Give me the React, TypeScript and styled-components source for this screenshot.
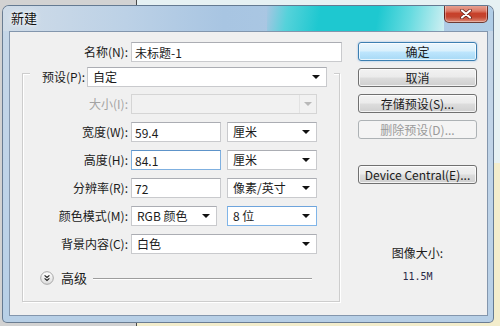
import React from "react";
import styled, { createGlobalStyle, css } from "styled-components";

const Global = createGlobalStyle`
  html, body { margin: 0; padding: 0; }
  body {
    width: 500px; height: 326px; overflow: hidden;
    font-family: "Noto Sans CJK SC", "Noto Sans", "Liberation Sans", sans-serif;
    font-size: 12px; color: #1b1b1b;
  }
`;

const Desktop = styled.div`
  width: 500px; height: 326px; box-sizing: border-box;
  padding: 5px 6px 3px 2px;
  background:
    linear-gradient(90deg, #d2d2d2 0 136px, #4a4a4a 136px 137px, transparent 137px),
    linear-gradient(180deg, #e6f1f3 0 50%, #f3edcc 50%);
`;

const Window = styled.div`
  width: 492px; height: 318px; box-sizing: border-box;
  border: 1px solid rgba(45, 65, 90, 0.6);
  border-radius: 7px 7px 5px 5px;
  background: linear-gradient(180deg, #c7d7e7 0%, #bed3e8 60%, #b7cfe6 100%);
  display: flex; flex-direction: column;
  overflow: hidden;
`;

const TitleBar = styled.div`
  height: 25px; flex: none;
  display: flex; justify-content: space-between; align-items: flex-start;
  padding-left: 8px;
  background-color: #b4cce4;
  background-image: linear-gradient(90deg, #d0dce8 0%, #bcd1e6 25%, #a8c5e2 45%, #b0cde6 100%);
`;

const Streak = styled.div`
  flex: 1; align-self: stretch;
  margin: 0 0 0 230px;
  background-color: #2cccd3;
  background-image: linear-gradient(100deg, #a8c5e2 0%, #55d2da 12%, #1ec8d0 30%, #1ec8d0 62%, #66dbe0 80%, #cfeff2 100%);
`;

const Title = styled.span`
  font-size: 13px; line-height: 16px; margin-top: 4px;
  color: #111;
  text-shadow: 0 0 6px rgba(255,255,255,1), 0 0 3px rgba(255,255,255,1);
`;

const CloseButton = styled.div`
  width: 44px; height: 18px; box-sizing: border-box; flex: none;
  margin: -1px 5px 0 0;
  border: 1px solid rgba(70, 25, 20, 0.75); border-top: none;
  border-radius: 0 0 5px 5px;
  background: linear-gradient(180deg, #e9a899 0%, #dc7a66 35%, #c7402a 50%, #c4452f 70%, #dc8b78 100%);
  box-shadow: inset 0 0 0 1px rgba(255,255,255,0.35);
  display: flex; align-items: center; justify-content: center;
`;

const Body = styled.div`
  flex: 1; display: flex;
  padding: 0 5px 6px 6px;
`;

const Client = styled.div`
  flex: 1; display: flex;
  background: #f0f0f0;
  border: 1px solid #8396ad;
`;

const LeftCol = styled.div`
  width: 332px; flex: none;
  display: flex; flex-direction: column;
  padding-top: 10px;
`;

const Row = styled.div<{ $labelWidth: number }>`
  display: flex; align-items: center; height: 20px;
  & > label { width: ${(p) => p.$labelWidth}px; }
`;

const Label = styled.label<{ $disabled?: boolean }>`
  flex: none; text-align: right; padding-right: 3px;
  white-space: nowrap; line-height: 20px;
  color: ${(p) => (p.$disabled ? "#a3a3a3" : "#1b1b1b")};
`;

const fieldBase = css`
  box-sizing: border-box; height: 20px;
  border: 1px solid #c9cacd; border-top-color: #abadb3;
  background: #fff;
  font: inherit; font-size: 12px; color: #1b1b1b;
`;

const TextInput = styled.input<{ $w: number; $focus?: boolean }>`
  ${fieldBase};
  width: ${(p) => p.$w}px;
  padding: 0 3px; outline: none;
  ${(p) => p.$focus && css`border-color: #7fb0e0; border-top-color: #5d93c9;`}
`;

const Combo = styled.div<{ $w?: number; $hover?: boolean; $disabled?: boolean }>`
  ${fieldBase};
  ${(p) => (p.$w ? css`width: ${p.$w}px; flex: none;` : css`flex: 1;`)}
  display: flex; align-items: center; justify-content: space-between;
  padding: 0 6px 0 5px; line-height: 18px;
  ${(p) => p.$hover && css`border-color: #80b5e8; border-top-color: #6ea4dc;`}
  ${(p) => p.$disabled && css`background: #f1f1f1; border-color: #d5d5d5; padding-right: 0;`}
`;

const Arrow = styled.span`
  width: 0; height: 0; flex: none;
  border-left: 4px solid transparent; border-right: 4px solid transparent;
  border-top: 4px solid #111;
`;

const DisabledDrop = styled.span`
  width: 16px; height: 18px; flex: none;
  border-left: 1px solid #e2e2e2;
  display: flex; align-items: center; justify-content: center;
  &::after {
    content: ""; width: 0; height: 0;
    border-left: 4px solid transparent; border-right: 4px solid transparent;
    border-top: 4px solid #b8b8b8;
  }
`;

const Gap = styled.span<{ $w: number }>`
  width: ${(p) => p.$w}px; flex: none;
`;

const GroupBox = styled.div`
  margin: 11px 0 0 12px;
  width: 318px; height: 229px; box-sizing: border-box;
  border: 1px solid #cdcdcd;
  box-shadow: inset 1px 1px 0 #fff, 1px 1px 0 #fff;
  display: flex; flex-direction: column;
`;

const GroupHeader = styled.div`
  margin: -7px 5px 0 7px;
  padding: 0 7px 0 12px;
  background: #f0f0f0;
  display: flex; align-items: center; height: 20px;
`;

const HeaderLabel = styled.label`
  flex: none; padding-right: 2px; line-height: 20px; white-space: nowrap;
`;

const GroupRows = styled.div`
  display: flex; flex-direction: column; gap: 8px;
  padding-top: 7px;
`;

const AdvancedRow = styled.div`
  display: flex; align-items: center; height: 16px;
  margin-top: 16px; padding-left: 17px;
`;

const AdvancedText = styled.span`
  margin-left: 7px; line-height: 16px; font-size: 13px;
`;

const Rule = styled.span`
  width: 219px; height: 1px; margin: 0 0 0 6px;
  background: #9d9d9d; box-shadow: 0 1px 0 #fff;
`;

const RightCol = styled.div`
  width: 119px; flex: none; margin-left: 16px;
  display: flex; flex-direction: column;
  padding-top: 10px;
`;

const Button = styled.div<{ $default?: boolean; $disabled?: boolean; $mt?: number }>`
  height: 19px; box-sizing: border-box;
  margin-top: ${(p) => p.$mt ?? 0}px;
  border: 1px solid #707070; border-radius: 3px;
  background: linear-gradient(180deg, #f2f2f2 0%, #ebebeb 48%, #dddddd 52%, #cfcfcf 100%);
  box-shadow: inset 0 0 0 1px rgba(255,255,255,0.75);
  display: flex; align-items: center; justify-content: center;
  font-size: 12px; line-height: 16px; color: #1b1b1b; white-space: nowrap;
  ${(p) => p.$default && css`
    border-color: #3c7fb1;
    background: linear-gradient(180deg, #eaf6fd 0%, #d9f0fc 48%, #bee6fd 52%, #a7d9f5 100%);
    box-shadow: inset 0 0 0 1px rgba(255,255,255,0.7), 0 0 2px rgba(60,140,220,0.6);
  `}
  ${(p) => p.$disabled && css`
    border-color: #adb2b5;
    background: #f4f4f4;
    color: #9a9a9a;
    box-shadow: none;
  `}
`;

const InfoBlock = styled.div`
  margin-top: 61px;
  display: flex; flex-direction: column; align-items: center; gap: 8px;
`;

const InfoTitle = styled.span`
  line-height: 16px; font-size: 12px;
`;

const InfoValue = styled.span`
  line-height: 16px; font-size: 10px;
  font-family: "DejaVu Sans Mono", "Liberation Mono", monospace;
  color: #2a2a48;
`;

const CloseIcon = () => (
  <svg width="14" height="10" viewBox="0 0 14 10">
    <path d="M3 1.5 L11 8.5 M11 1.5 L3 8.5" stroke="#5a1a12" strokeWidth="3.6" strokeLinecap="round" />
    <path d="M3 1.5 L11 8.5 M11 1.5 L3 8.5" stroke="#ffffff" strokeWidth="2.2" strokeLinecap="round" />
  </svg>
);

const ExpandIcon = () => (
  <svg width="14" height="14" viewBox="0 0 14 14">
    <defs>
      <linearGradient id="eg" x1="0" y1="0" x2="0" y2="1">
        <stop offset="0" stopColor="#ffffff" />
        <stop offset="1" stopColor="#dcdcdc" />
      </linearGradient>
    </defs>
    <circle cx="7" cy="7" r="6.3" fill="url(#eg)" stroke="#a6a6a6" strokeWidth="1" />
    <path d="M4.6 4.4 L7 6.4 L9.4 4.4 M4.6 7.4 L7 9.4 L9.4 7.4" fill="none" stroke="#222" strokeWidth="1.2" />
  </svg>
);

export default function App() {
  return (
    <>
      <Global />
      <Desktop>
        <Window>
          <TitleBar>
            <Title>新建</Title>
            <Streak />
            <CloseButton><CloseIcon /></CloseButton>
          </TitleBar>
          <Body>
            <Client>
              <LeftCol>
                <Row $labelWidth={118}>
                  <Label>名称(N):</Label>
                  <TextInput $w={211} defaultValue="未标题-1" readOnly />
                </Row>
                <GroupBox>
                  <GroupHeader>
                    <HeaderLabel>预设(P):</HeaderLabel>
                    <Combo>自定<Arrow /></Combo>
                  </GroupHeader>
                  <GroupRows>
                    <Row $labelWidth={105}>
                      <Label $disabled>大小(I):</Label>
                      <Combo $w={186} $disabled><span /><DisabledDrop /></Combo>
                    </Row>
                    <Row $labelWidth={105}>
                      <Label>宽度(W):</Label>
                      <TextInput $w={90} defaultValue="59.4" readOnly />
                      <Gap $w={6} />
                      <Combo $w={90}>厘米<Arrow /></Combo>
                    </Row>
                    <Row $labelWidth={105}>
                      <Label>高度(H):</Label>
                      <TextInput $w={90} $focus defaultValue="84.1" readOnly />
                      <Gap $w={6} />
                      <Combo $w={90}>厘米<Arrow /></Combo>
                    </Row>
                    <Row $labelWidth={105}>
                      <Label>分辨率(R):</Label>
                      <TextInput $w={90} defaultValue="72" readOnly />
                      <Gap $w={6} />
                      <Combo $w={90}>像素/英寸<Arrow /></Combo>
                    </Row>
                    <Row $labelWidth={105}>
                      <Label>颜色模式(M):</Label>
                      <Combo $w={86}>RGB 颜色<Arrow /></Combo>
                      <Gap $w={10} />
                      <Combo $w={90} $hover>8 位<Arrow /></Combo>
                    </Row>
                    <Row $labelWidth={105}>
                      <Label>背景内容(C):</Label>
                      <Combo $w={186}>白色<Arrow /></Combo>
                    </Row>
                  </GroupRows>
                  <AdvancedRow>
                    <ExpandIcon />
                    <AdvancedText>高级</AdvancedText>
                    <Rule />
                  </AdvancedRow>
                </GroupBox>
              </LeftCol>
              <RightCol>
                <Button $default>确定</Button>
                <Button $mt={7}>取消</Button>
                <Button $mt={7}>存储预设(S)...</Button>
                <Button $mt={7} $disabled>删除预设(D)...</Button>
                <Button $mt={26}>Device Central(E)...</Button>
                <InfoBlock>
                  <InfoTitle>图像大小:</InfoTitle>
                  <InfoValue>11.5M</InfoValue>
                </InfoBlock>
              </RightCol>
            </Client>
          </Body>
        </Window>
      </Desktop>
    </>
  );
}
